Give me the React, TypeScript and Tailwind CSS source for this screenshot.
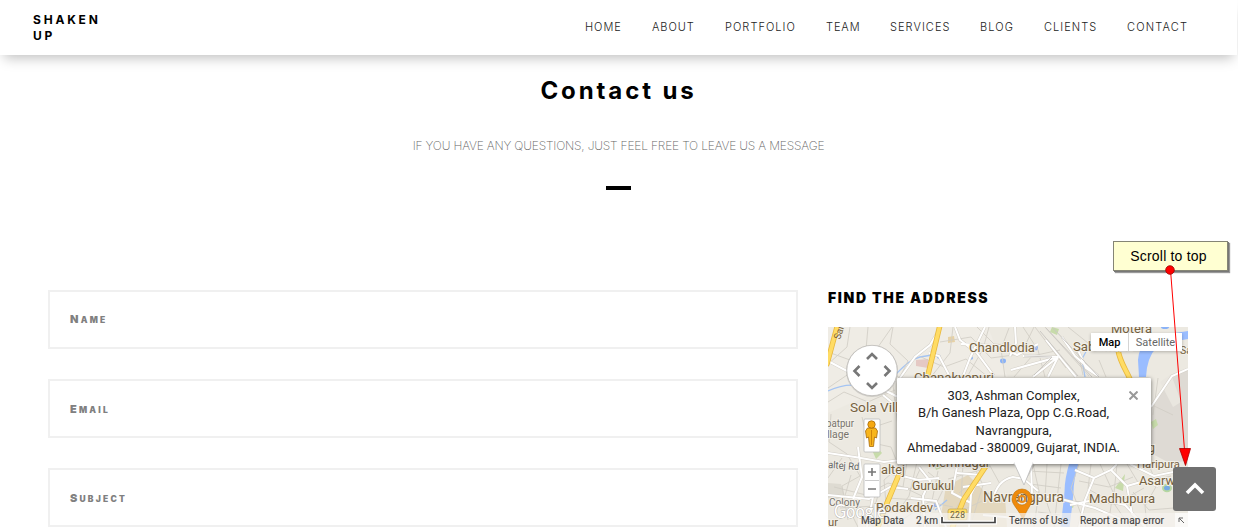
import React from "react";

const nav = [
  { label: "HOME", cls: "w-[67px] tracking-[0.95px]" },
  { label: "ABOUT", cls: "w-[73px] tracking-[0.95px]" },
  { label: "PORTFOLIO", cls: "w-[101px] tracking-[1.05px]" },
  { label: "TEAM", cls: "w-[64px] tracking-[0.9px]" },
  { label: "SERVICES", cls: "w-[90px] tracking-[1.05px]" },
  { label: "BLOG", cls: "w-[64px] tracking-[1.1px]" },
  { label: "CLIENTS", cls: "w-[83px] tracking-[1.05px]" },
  { label: "CONTACT", cls: "w-[62px] tracking-[1.2px]" },
];

const fields = ["Name", "Email", "Subject"];

const minorRoads = [
  "M828 352l22 8 28-13 14-20M850 327l-3 20-19 17M868 327l-3 34 28 24 5 42M893 327l-3 17 18 17-9 18M828 388l25-17 42 3 10 9",
  "M828 402l16-10 24 10 27-12M831 414l-2 28 18 12 13 22-18 10 6 34M842 458l-14 20M862 417l3 13 27-9",
  "M868 442l23 5 8 20-15 13 4 47M851 475l-7 24 14 28M834 487l32 8 22-12 23 6 10-22M840 508l35-2 5-18",
  "M907 462l-4 25 19 9-3 31M917 462l-8 34-13 18M888 498l44 3 6-30M902 520l27-18 24 5M928 472l17 14-12 24",
  "M940 342l31-5 20 21 30-4 13-27M921 357l23 10 22-8 22 18M953 327l-3 26-19 24M989 327l-6 22-16 28M1009 328l-8 21 4 28M977 327l17 17 28 2",
  "M1023 327l15 23 7 27M1035 327l31 41M1045 327l44 49M1068 327l20 16M1060 350l-28 6-18 21M1078 352l5 23M1099 360l7 17",
  "M963 464l-2 36-16 27M972 463l11 22-13 42M948 479l36-10M989 464l11 20M961 511l21-10M979 477l-20 16",
  "M1033 464l6 27-5 36M1047 464l-2 33 10 30M1028 471l36 2M1030 484l31 4M1032 499l27-2M1038 512l22 3M1061 464l-7 63",
  "M1079 464l-8 24 15 39M1091 464l-3 25 22 12M1100 464l13 28-5 35M1079 481l30 6 24-10M1070 501l46 3 28-16M1117 464l-4 38 17 25M1127 464l12 20 32-8M1149 465l8 20-12 21 2 21M1133 492l16 18 25-2M1158 378l-5 37M1152 405l21 10",
];

const streets = [
  "M828 361l38 20 34 17M883 395l22 18M900 378l15-21 15-12 11-18M929 353l10 3 10 19",
  "M828 453l27 4 29 5 17-2M828 495l41 4 21-12 18 2M875 487l-8 40M858 447l4 30-9 22",
  "M919 467l11 14-7 15 2 31M887 472l31 8 21-2M911 498l25 3 10 26",
  "M986 464l-15 30-2 33M963 487l28-4M981 475l-24-2M957 467l-5 26 19 10",
  "M993 500q4-20 20-23l11 2 14 12M983 515l22 2 17 3",
  "M955 327l5 13 17 13 17 23M985 327l-15 31-7 18M1015 327l1 16-6 13M961 344l39 2 17 9 21-11",
  "M1023 356l35 1M1058 357l-25 20M1058 357l-10 20M1011 370l47-13M1046 340l16 20 14 17M1062 337l13 19 23 20M1078 350l8 18 12 8",
  "M1151 407l21-31 16-7M1031 464l1 31 25 3 38 10 30 13M1070 505l28-6 27 6 20 22M1075 470l19 8 17-8 6-6M1094 478l-9 22-6 27M1111 470l16 16 17-5 14 5M1127 486l5 28 14 13M1130 464l24 12 34-7",
];

const labels: { t: string; x: number; y: number; w: number; s: number; r?: number; c?: string }[] = [
  { t: "Motera", x: 1111, y: 333, w: 41, s: 13 },
  { t: "Chandlodia", x: 969, y: 352, w: 66, s: 13.5 },
  { t: "Sabarmati", x: 1073, y: 351, w: 60, s: 13.5 },
  { t: "Sa", x: 1180, y: 354, w: 12, s: 11 },
  { t: "Chanakyapuri", x: 914, y: 382, w: 80, s: 13 },
  { t: "Sola Village", x: 850, y: 412, w: 71, s: 13.5 },
  { t: "patpur", x: 826, y: 427, w: 28, s: 10.5, c: "#77736c" },
  { t: "llage", x: 827, y: 438, w: 22, s: 10.5, c: "#77736c" },
  { t: "altej Rd", x: 828, y: 468, w: 31, s: 10, r: 4, c: "#656565" },
  { t: "altej", x: 881, y: 474, w: 24, s: 13.5 },
  { t: "Memnagar", x: 928, y: 467, w: 62, s: 13 },
  { t: "Gurukul", x: 912, y: 490, w: 42, s: 13.5 },
  { t: "Navrangpura", x: 983, y: 502, w: 81, s: 14 },
  { t: "Madhupura", x: 1089, y: 503, w: 66, s: 13.5 },
  { t: "Asarwa", x: 1139, y: 485, w: 43, s: 13.5 },
  { t: "Haripura", x: 1137, y: 468, w: 43, s: 11 },
  { t: "g", x: 1148, y: 452, w: 7, s: 12 },
  { t: "Bodakdev", x: 876, y: 512, w: 57, s: 13.5 },
  { t: "Colony", x: 829, y: 506, w: 31, s: 10.5, c: "#77736c" },
  { t: "ur", x: 828, y: 526, w: 10, s: 11 },
];

function MapArt() {
  return (
    <svg className="block h-[200px] w-[360px]" viewBox="828 327 360 200" fontFamily="Roboto, 'Liberation Sans', sans-serif">
      <rect x="828" y="327" width="360" height="200" fill="#ece9e1" />
      <path d="M828 327h160l20 50-44 12-60-9-76 33z" fill="#efece5" />
      <path d="M1151 407l21-31 16-7v91l-17 4-20-11z" fill="#dedad4" />
      <path d="M1160 382l11-8 10 28-8 5z" fill="#e9e6df" />
      <path d="M946 486l22-11 17 17 20 4 2 31h-68z" fill="#e3d7bd" />
      <path d="M828 483l13 1 4 12-10 4-7-2zM862 522l9-10 10 11-7 4z" fill="#dedbd2" />
      <path d="M916 360l12-1v9l-12-2z" fill="#e5c9c4" />
      <path d="M1052 327l7 2-2 6-7-3zM1115 488l10-14-2 17zM1066 498l9 4-2 6-9-3zM1151 422l5-3 2 6-5 4zM872 450l5-3 5 6-6 6zM934 463l7-2 3 6-8 3z" fill="#c7dbaa" />
      <path d="M948 337l6-1 1 6-7 1z" fill="#e7d1a4" />
      <path d="M1139 377l-1-17q1-13 9-19 17-7 41-10v8q-22 3-31 8-10 10-11 30z" fill="#9abdff" />
      <path d="M1065 527c2-15 3-24 4-35 0-12 2-19 5-29" fill="none" stroke="#9abdff" strokeWidth="9" />
      <path d="M895 375c10-10 16-16 25-18l12-2M828 391q20-9 35-4M1089 346l-7 13 3 18M947 500l-12 10M982 469l8-3M1160 478l11 5" fill="none" stroke="#a4c4f3" strokeWidth="1.3" />
      <ellipse cx="1003" cy="361" rx="3" ry="2.4" fill="#8ab2f7" />
      <ellipse cx="939" cy="357" rx="2" ry="1.7" fill="#8ab2f7" />
      <ellipse cx="971" cy="358" rx="2" ry="1.7" fill="#8ab2f7" />
      <ellipse cx="1036" cy="348" rx="2" ry="2.4" fill="#8ab2f7" />
      <ellipse cx="1167" cy="488" rx="4" ry="3.3" fill="#75aae4" stroke="#b6d7a0" strokeWidth="2" />
      <ellipse cx="936" cy="505" rx="3" ry="2" fill="#7aa9f3" />
      <ellipse cx="1165" cy="327" rx="4" ry="2" fill="#8ab2f7" />
      <g fill="none" stroke="#d1cdc5" strokeWidth=".85">{minorRoads.map((d) => <path key={d} d={d} />)}</g>
      <g fill="none" stroke="#d3cfc7" strokeWidth="3">{streets.map((d) => <path key={d} d={d} />)}</g>
      <g fill="none" stroke="#fff" strokeWidth="2">{streets.map((d) => <path key={d} d={d} />)}</g>
      <path d="M1024 356l28 1-18 18M1040 331l38 45M1046 328l46 49M1053 328l46 49" fill="none" stroke="#cbc8c4" strokeWidth="1" />
      <g fill="none" strokeLinecap="round">
        <path d="M837 327l-10 37M940 325l-13 54M1118 350c2 12 7 18 12 29M900 472l-13 31-9 24M986 466l-22 33-13 32" stroke="#e8b83e" strokeWidth="5.4" />
        <path d="M837 327l-10 37M940 325l-13 54M1118 350c2 12 7 18 12 29M900 472l-13 31-9 24M986 466l-22 33-13 32" stroke="#ffdc65" strokeWidth="3.8" />
      </g>
      <text x="0" y="0" fontSize="10" fill="#776341" transform="translate(840 340) rotate(-72)" textLength="14" lengthAdjust="spacingAndGlyphs">Sar</text>
      <g>
        {labels.map((l) => (
          <text key={l.t + l.x} x={l.x} y={l.y} fontSize={l.s} textLength={l.w} lengthAdjust="spacingAndGlyphs" fill={l.c ?? "#75613e"} stroke="#f3f0e9" strokeWidth="2" paintOrder="stroke" transform={l.r ? `rotate(${l.r} ${l.x} ${l.y})` : undefined}>{l.t}</text>
        ))}
      </g>
      <rect x="948" y="509" width="19" height="11" rx="2" fill="#ffdd65" stroke="#bba152" strokeWidth=".7" />
      <path d="M1022 489a10 10 0 0 1 10 10c0 6-5 9-9 21-5-12-11-15-11-21a10 10 0 0 1 10-10zm0 4a6 6 0 1 0 0 12 6 6 0 0 0 0-12z" fill="#ef8a0b" fillRule="evenodd" stroke="#bb740e" strokeWidth=".6" />
      <circle cx="1022" cy="499" r="3" fill="none" stroke="#e88b19" strokeWidth="1.8" />
      <path d="M858 513h317v14H858z" fill="#f5f3ee" opacity=".72" />
      <text x="950" y="518" fontSize="8.5" fill="#686047" textLength="15">228</text>
      <text x="834" y="518" fontSize="19" fill="#fff" stroke="#b3b0a9" strokeWidth="1" paintOrder="stroke" textLength="52" lengthAdjust="spacingAndGlyphs" fontFamily="Lato, sans-serif">Google</text>
      <g fontSize="10" fill="#444" stroke="#444" strokeWidth=".12">
        <text x="861" y="524" textLength="43" lengthAdjust="spacingAndGlyphs">Map Data</text>
        <text x="916" y="524" textLength="22" lengthAdjust="spacingAndGlyphs">2 km</text>
        <text x="1009" y="524" textLength="59" lengthAdjust="spacingAndGlyphs">Terms of Use</text>
        <text x="1080" y="524" textLength="84" lengthAdjust="spacingAndGlyphs">Report a map error</text>
      </g>
      <path d="M942 517v5.5h53V517" fill="none" stroke="#fff" strokeWidth="4" />
      <path d="M942 517v5.5h53V517" fill="none" stroke="#444" strokeWidth="1.7" />
      <path d="M1175 513h13v14h-13z" fill="#faf9f7" />
      <path d="M1184 523l-5-5m0 4v-4h4" fill="none" stroke="#666" strokeWidth="1" />
    </svg>
  );
}

function MapControls() {
  return (
    <svg className="pointer-events-none absolute inset-0 h-[200px] w-[360px]" viewBox="828 327 360 200">
      <circle cx="872" cy="371" r="26" fill="#777" opacity=".25" />
      <circle cx="872" cy="370.5" r="25.2" fill="#fff" stroke="#bcbab6" strokeWidth=".8" />
      <g fill="none" stroke="#777" strokeWidth="2.6">
        <path d="M867 359l5-5 5 5M867 383l5 5 5-5M859.5 366l-5 5 5 5M884.5 366l5 5-5 5" />
      </g>
      <rect x="864" y="419" width="16" height="33" rx="1" fill="#fff" stroke="#bbb" strokeWidth=".8" />
      <path d="M867.5 428h8l2 3-1 7-2-1-1 9.5h-4l-1-9.5-2 1-1-7z" fill="#f8b51b" stroke="#a66a0d" strokeWidth=".8" />
      <path d="M871.5 430v15" stroke="#c47809" strokeWidth=".8" />
      <circle cx="871.5" cy="424.5" r="3.7" fill="#f6a912" stroke="#a66a0d" strokeWidth=".8" />
      <rect x="864" y="464" width="16" height="33" rx="1" fill="#fff" stroke="#bbb" strokeWidth=".8" />
      <path d="M865 480.5h14" stroke="#ccc" />
      <path d="M868 472h8m-4-4v8M868 489h8" stroke="#777" strokeWidth="1.6" />
      <path d="M1017 465l7 18 11-18z" fill="#777" opacity=".28" />
      <path d="M1014 463l10 22 9-22z" fill="#fff" stroke="#bbb" strokeWidth=".8" />
      <path d="M1014.5 461h18v3h-18z" fill="#fff" />
    </svg>
  );
}

function AddressMap() {
  return (
    <div className="relative h-[200px] w-[360px] overflow-hidden">
      <MapArt />
      <div className="absolute left-[263px] top-[6px] flex h-[18px] bg-white font-['Roboto'] text-[11px] leading-[19px] shadow-[0_1px_3px_rgba(0,0,0,0.25)]">
        <button className="w-[38px] border-r border-[#d4d4d4] font-medium text-black">Map</button>
        <button className="w-[53px] text-[#666]">Satellite</button>
      </div>
      <div className="absolute left-[69px] top-[51px] h-[86px] w-[254px] rounded-[1px] bg-white pt-[9px] text-center font-['Roboto'] text-[13px] leading-[17.4px] tracking-[-0.03px] text-[#222] shadow-[0_1px_4px_rgba(0,0,0,0.55)]">
        <address className="w-[233px] whitespace-nowrap not-italic">
          303, Ashman Complex,<br />B/h Ganesh Plaza, Opp C.G.Road,<br />Navrangpura,<br />Ahmedabad - 380009, Gujarat, INDIA.
        </address>
        <svg className="absolute right-[13px] top-[13px] h-[9px] w-[9px]" viewBox="0 0 9 9"><path d="M.5.5l8 8M8.5.5l-8 8" stroke="#999" strokeWidth="2" /></svg>
      </div>
      <MapControls />
    </div>
  );
}

export default function App() {
  return (
    <div className="relative h-[532px] w-[1238px] bg-white">
      <div className="h-[527px] overflow-hidden">
        <header className="flex h-[55px] w-[1237px] items-start bg-white shadow-[0_7px_12px_-4px_rgba(0,0,0,0.25)]">
          <div className="ml-[33px] mt-[11.5px] w-[552px] font-['Inter'] text-[12px] leading-[16px] font-bold tracking-[2.8px] text-black">SHAKEN<br />UP</div>
          <nav className="mt-[18px] flex font-['Inter'] text-[11px] leading-[18px] font-light text-[#222]">
            {nav.map((n) => <a key={n.label} className={`block whitespace-nowrap ${n.cls}`}>{n.label}</a>)}
          </nav>
        </header>
        <section className="flex h-[235px] w-[1237px] flex-col items-center">
          <h1 className="mt-[18px] font-['Inter'] text-[24px] leading-[36px] font-bold tracking-[2.9px] text-black">Contact us</h1>
          <p className="mt-[27px] whitespace-nowrap font-['Inter'] text-[12px] leading-[20px] font-extralight tracking-[-0.18px] text-[#666]">IF YOU HAVE ANY QUESTIONS, JUST FEEL FREE TO LEAVE US A MESSAGE</p>
          <div className="mt-[30px] h-[4px] w-[25px] bg-black" />
        </section>
        <main className="flex gap-[30px] pl-[48px]">
          <form className="flex w-[750px] flex-col gap-[30px]">
            {fields.map((f) => (
              <label key={f} className="flex h-[59px] shrink-0 items-center border-2 border-[#f0f0f0] pt-px pl-5 first:pt-0 first:pb-px">
                <span className="block font-['Inter'] text-[8.5px] leading-[14px] font-black tracking-[2.2px] text-[#808080] uppercase first-letter:text-[11px]">{f}</span>
              </label>
            ))}
          </form>
          <aside>
            <h2 className="h-[37px] whitespace-nowrap font-['Inter'] text-[14px] leading-[16px] font-black tracking-[1.62px] text-black">FIND THE ADDRESS</h2>
            <AddressMap />
          </aside>
        </main>
      </div>
      <button aria-label="Scroll to top" className="absolute left-[1173px] top-[467px] flex h-[44px] w-[43px] items-center justify-center rounded-[3px] bg-[#707070]">
        <svg className="h-[14px] w-[20px]" viewBox="0 0 20 14"><path d="M2 11l8-8 8 8" fill="none" stroke="#fff" strokeWidth="3.6" /></svg>
      </button>
      <div className="absolute left-[1113px] top-[241px] flex h-[30px] w-[115px] items-center justify-center border border-[#858575] bg-[#ffffd2] pr-1 font-['Liberation_Sans'] text-[14px] tracking-[0.2px] text-black shadow-[1px_1px_0_#777,2px_2px_1px_#999]">Scroll to top</div>
      <svg className="pointer-events-none absolute left-[1160px] top-[260px] h-[210px] w-[40px]" viewBox="1160 260 40 210">
        <path d="M1170.5 270l14 180" stroke="#f00" />
        <circle cx="1170" cy="270" r="4.3" fill="#f00" stroke="#900" strokeWidth=".8" />
        <path d="M1179.5 448.5h11l-5 17z" fill="#f00" stroke="#a00" strokeWidth=".8" />
      </svg>
    </div>
  );
}
